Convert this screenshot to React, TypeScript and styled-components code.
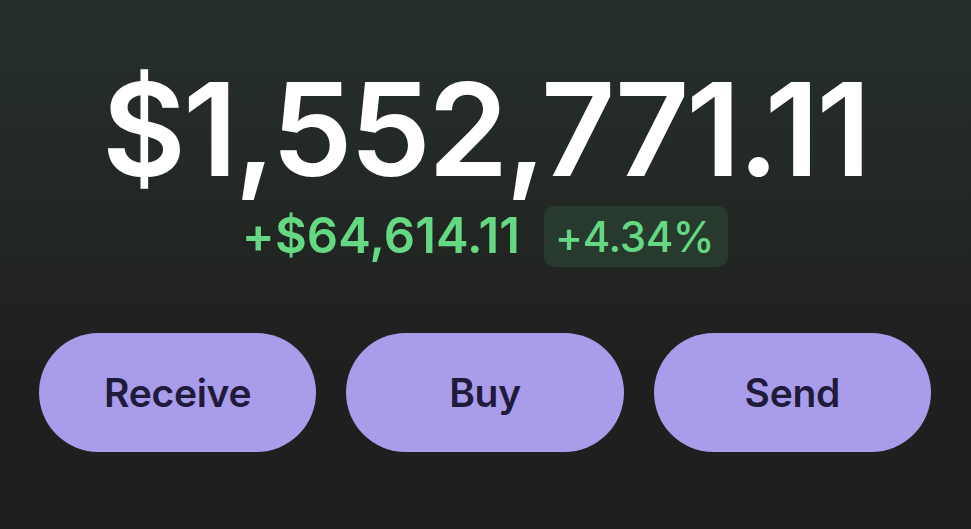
import React from "react";
import styled, { createGlobalStyle } from "styled-components";

const Global = createGlobalStyle`
  html, body { margin: 0; padding: 0; background: #1f1f1f; }
  body { font-family: Inter, "Noto Sans", sans-serif; }
`;

const Screen = styled.div`
  width: 971px;
  height: 529px;
  box-sizing: border-box;
  background: linear-gradient(180deg, #26302b 0%, #222623 45%, #1f1f1f 70%, #1f1f1f 100%);
  display: flex;
  flex-direction: column;
  align-items: center;
  padding: 54px 40px 0 39px;
  overflow: hidden;
`;

const Balance = styled.div`
  color: #ffffff;
  font-size: 129px;
  font-weight: 600;
  line-height: 150px;
  letter-spacing: -2.9px;
`;

const ChangeRow = styled.div`
  display: flex;
  align-items: center;
  gap: 24px;
  margin-top: 1px;
`;

const ChangeText = styled.span`
  color: #64d883;
  font-size: 49px;
  font-weight: 600;
  letter-spacing: 0.1px;
  line-height: 62px;
`;

const Badge = styled.span`
  color: #64d883;
  font-size: 42px;
  font-weight: 500;
  line-height: 61px;
  letter-spacing: -0.4px;
  padding: 0 14px 0 11px;
  border-radius: 10px;
  background: #273a2d;
`;

const Actions = styled.div`
  display: grid;
  grid-template-columns: repeat(3, 1fr);
  gap: 30px;
  width: 100%;
  margin-top: 66px;
`;

const Action = styled.button`
  height: 119px;
  border: none;
  border-radius: 60px;
  background: #a99ceb;
  color: #211b3b;
  font-family: Inter, "Noto Sans", sans-serif;
  font-size: 39px;
  font-weight: 600;
  letter-spacing: -0.3px;
  cursor: pointer;
  padding: 0;
`;

export default function App() {
  return (
    <>
      <Global />
      <Screen>
        <Balance>$1,552,771.11</Balance>
        <ChangeRow>
          <ChangeText>+$64,614.11</ChangeText>
          <Badge>+4.34%</Badge>
        </ChangeRow>
        <Actions>
          <Action>Receive</Action>
          <Action>Buy</Action>
          <Action>Send</Action>
        </Actions>
      </Screen>
    </>
  );
}
